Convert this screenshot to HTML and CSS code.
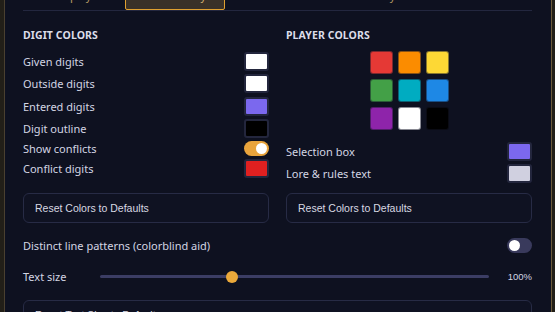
FILE: index.html
```html
<!DOCTYPE html>
<html lang="en">
<head>
    <meta charset="UTF-8">
    <meta name="viewport" content="width=device-width, initial-scale=1.0">
    <title>Settings</title>
    <link rel="stylesheet" href="styles.css">
</head>
<body>
    <div class="modal">
        <div class="scroller">
            <div class="tabs">
                <div class="tab">Display</div>
                <div class="tab active">Accessibility</div>
                <div class="tab">Audio</div>
                <div class="tab">Hotkeys</div>
                <div class="tab">Save Data</div>
            </div>

            <div class="columns">
                <div class="section">
                    <h3>Digit Colors</h3>
                    <div class="rows">
                        <div class="row"><span>Given digits</span><span class="swatch" style="background:#ffffff"></span></div>
                        <div class="row"><span>Outside digits</span><span class="swatch" style="background:#ffffff"></span></div>
                        <div class="row"><span>Entered digits</span><span class="swatch" style="background:#7b68ee"></span></div>
                        <div class="row"><span>Digit outline</span><span class="swatch" style="background:#000000"></span></div>
                        <div class="row short"><span>Show conflicts</span><span class="toggle on"></span></div>
                        <div class="row"><span>Conflict digits</span><span class="swatch" style="background:#e02020"></span></div>
                    </div>
                </div>
                <div class="section">
                    <h3>Player Colors</h3>
                    <div class="palette">
                        <span class="chip" style="background:#e53935"></span>
                        <span class="chip" style="background:#fb8c00"></span>
                        <span class="chip" style="background:#fdd835"></span>
                        <span class="chip" style="background:#43a047"></span>
                        <span class="chip" style="background:#00acc1"></span>
                        <span class="chip" style="background:#1e88e5"></span>
                        <span class="chip" style="background:#8e24aa"></span>
                        <span class="chip" style="background:#ffffff"></span>
                        <span class="chip" style="background:#000000"></span>
                    </div>
                    <div class="rows">
                        <div class="row"><span>Selection box</span><span class="swatch" style="background:#7b68ee"></span></div>
                        <div class="row"><span>Lore &amp; rules text</span><span class="swatch" style="background:#d0d0e0"></span></div>
                    </div>
                </div>
                <button class="reset">Reset Colors to Defaults</button>
                <button class="reset">Reset Colors to Defaults</button>
            </div>

            <div class="row wide">
                <span>Distinct line patterns (colorblind aid)</span>
                <span class="toggle"></span>
            </div>

            <div class="row wide size">
                <span class="size-label">Text size</span>
                <input type="range" min="75" max="150" value="100" class="slider">
                <span class="size-value">100%</span>
            </div>

            <button class="reset full">Reset Text Size to Defaults</button>
        </div>
    </div>
</body>
</html>
```

FILE: styles.css
```css
body {
    margin: 0;
    background-color: #221f18;
    font-family: "Noto Sans", "Open Sans", sans-serif;
    color: #d3d5e3;
}

.modal {
    height: 312px;
    margin: 0 3px 0 4px;
    border-left: 1px solid #4a4030;
    border-right: 1px solid #6b5a3a;
    background-color: #0e1120;
    overflow: hidden;
}

.scroller {
    margin-top: -18px;
    padding: 0 19px 0 18px;
}

/* tabs */
.tabs {
    display: flex;
    gap: 3px;
    border-bottom: 1px solid #23273f;
}

.tab {
    flex: 1;
    height: 28px;
    line-height: 26px;
    text-align: center;
    font-size: 11px;
    color: #b59a64;
    box-sizing: border-box;
    border: 1.5px solid transparent;
    border-bottom: none;
}

.tab.active {
    background-color: #3a3128;
    border: 1.5px solid #e0a030;
    border-radius: 3px 3px 2px 2px;
    color: #d4b070;
}

/* two columns */
.columns {
    display: grid;
    grid-template-columns: 1fr 1fr;
    column-gap: 17px;
}

h3 {
    margin: 17px 0 10px 0;
    font-size: 10.5px;
    line-height: 14px;
    font-weight: bold;
    text-transform: uppercase;
    letter-spacing: 0.1px;
    color: #dcdde9;
}

.rows {
    display: flex;
    flex-direction: column;
    gap: 3.3px;
}

.row {
    display: flex;
    justify-content: space-between;
    align-items: center;
    height: 19px;
    font-size: 11px;
}

.row.short {
    height: 15px;
}

.swatch {
    width: 25px;
    height: 19px;
    box-sizing: border-box;
    border: 2px solid #23263d;
    border-radius: 3px;
}

.toggle {
    position: relative;
    width: 25px;
    height: 15px;
    border-radius: 8px;
    background-color: #393a5c;
}

.toggle::after {
    content: "";
    position: absolute;
    top: 2px;
    left: 2px;
    width: 11px;
    height: 11px;
    border-radius: 50%;
    background-color: #ffffff;
}

.toggle.on {
    background-color: #e9a43c;
}

.toggle.on::after {
    left: 12px;
}

.palette {
    display: grid;
    grid-template-columns: repeat(3, 23px);
    grid-auto-rows: 23px;
    gap: 5px;
    justify-content: center;
    margin: -1px 0 12px 0;
}

.chip {
    border-radius: 3px;
    box-sizing: border-box;
    border: 1px solid rgba(20, 22, 40, 0.5);
}

.reset {
    height: 30px;
    margin-top: 10px;
    padding: 0 11px;
    text-align: left;
    background-color: #0f1222;
    border: 1px solid #272b45;
    border-radius: 6px;
    color: #d8d9e3;
    font-family: "Liberation Sans", Arial, sans-serif;
    font-size: 10.5px;
}

.row.wide {
    margin-top: 15px;
    height: 15px;
}

.row.size {
    margin-top: 16px;
}

.size-label {
    width: 77px;
}

.slider {
    -webkit-appearance: none;
    appearance: none;
    flex: 1;
    height: 3px;
    margin: 0 19px 0 0;
    background-color: #3b3d64;
    border-radius: 2px;
    outline: none;
}

.slider::-webkit-slider-thumb {
    -webkit-appearance: none;
    width: 12px;
    height: 12px;
    border-radius: 50%;
    background-color: #eba93a;
    border: none;
}

.size-value {
    font-family: "Liberation Sans", Arial, sans-serif;
    font-size: 9.5px;
    text-align: right;
}

.reset.full {
    width: 100%;
    margin-top: 16px;
}
```
